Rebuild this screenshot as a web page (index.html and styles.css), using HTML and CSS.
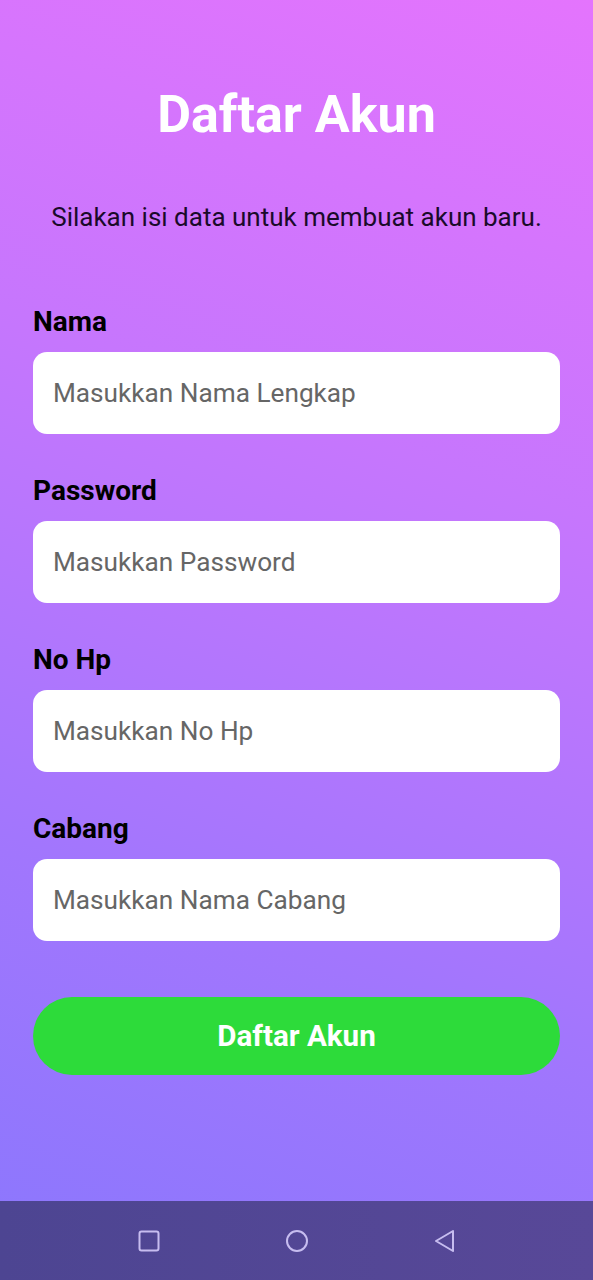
FILE: index.html
```html
<!DOCTYPE html>
<html lang="id">
<head>
<meta charset="utf-8">
<title>Daftar Akun</title>
<link rel="stylesheet" href="styles.css">
</head>
<body>
<div class="screen">
  <main class="content">
    <h1 class="title">Daftar Akun</h1>
    <p class="subtitle">Silakan isi data untuk membuat akun baru.</p>
    <form class="form">
      <div class="field">
        <label class="label">Nama</label>
        <div class="input">Masukkan Nama Lengkap</div>
      </div>
      <div class="field">
        <label class="label">Password</label>
        <div class="input">Masukkan Password</div>
      </div>
      <div class="field">
        <label class="label">No Hp</label>
        <div class="input">Masukkan No Hp</div>
      </div>
      <div class="field">
        <label class="label">Cabang</label>
        <div class="input">Masukkan Nama Cabang</div>
      </div>
      <div class="button">Daftar Akun</div>
    </form>
  </main>
  <nav class="navbar">
    <svg class="nav-icon" viewBox="0 0 24 24" width="24" height="24"><rect x="2.5" y="2.5" width="19" height="19" rx="2" fill="none" stroke="#c7bdf0" stroke-width="2"/></svg>
    <svg class="nav-icon" viewBox="0 0 24 24" width="24" height="24"><circle cx="12" cy="12" r="10" fill="none" stroke="#c7bdf0" stroke-width="2"/></svg>
    <svg class="nav-icon" viewBox="0 0 24 24" width="24" height="24"><path d="M20 2 L3 12 L20 22 Z" fill="none" stroke="#c7bdf0" stroke-width="2" stroke-linejoin="round"/></svg>
  </nav>
</div>
</body>
</html>
```

FILE: styles.css
```css
* { box-sizing: border-box; }
html, body { margin: 0; padding: 0; }
body {
  font-family: Roboto, "Liberation Sans", sans-serif;
}
.screen {
  width: 593px;
  height: 1280px;
  display: flex;
  flex-direction: column;
  background: linear-gradient(200deg, #e474fd 0%, #c676fd 35%, #a276fd 70%, #8a77fd 100%);
}
.content {
  flex: 1;
  padding: 84px 33px 0;
  display: flex;
  flex-direction: column;
}
.title {
  margin: 0;
  text-align: center;
  color: #ffffff;
  font-size: 52px;
  font-weight: 700;
  line-height: 62px;
}
.subtitle {
  margin: 56px 0 0;
  text-align: center;
  color: #1a0a2a;
  font-size: 26px;
  line-height: 30px;
}
.form {
  margin-top: 74px;
  display: flex;
  flex-direction: column;
  gap: 41px;
}
.field {
  display: flex;
  flex-direction: column;
  gap: 14px;
}
.label {
  color: #000000;
  font-size: 28px;
  font-weight: 700;
  line-height: 32px;
}
.input {
  height: 82px;
  background: #ffffff;
  border-radius: 14px;
  padding: 0 20px;
  display: flex;
  align-items: center;
  color: #666666;
  font-size: 26.2px;
}
.button {
  margin-top: 15px;
  height: 78px;
  border-radius: 39px;
  background: #2ddb3a;
  color: #ffffff;
  font-size: 29.6px;
  font-weight: 700;
  display: flex;
  align-items: center;
  justify-content: center;
}
.navbar {
  height: 79px;
  background: linear-gradient(90deg, #4d4592, #584898);
  display: flex;
  align-items: center;
  justify-content: center;
  gap: 124px;
}
.nav-icon { display: block; }
```
